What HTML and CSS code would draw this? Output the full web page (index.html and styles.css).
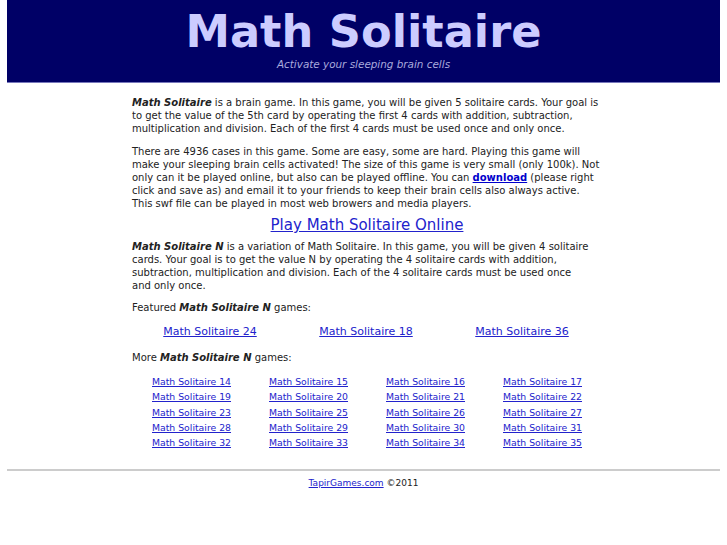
FILE: index.html
```html
<!DOCTYPE html>
<html>
<head>
<meta charset="utf-8">
<title>Math Solitaire</title>
<link rel="stylesheet" href="styles.css">
</head>
<body>
<div class="header">
  <h1 class="title">Math Solitaire</h1>
  <div class="tagline">Activate your sleeping brain cells</div>
</div>
<div class="main">
  <p><b><i>Math Solitaire</i></b> is a brain game. In this game, you will be given 5 solitaire cards. Your goal is to get the value of the 5th card by operating the first 4 cards with addition, subtraction, multiplication and division. Each of the first 4 cards must be used once and only once.</p>
  <p class="p2">There are 4936 cases in this game. Some are easy, some are hard. Playing this game will make your sleeping brain cells activated! The size of this game is very small (only 100k). Not only can it be played online, but also can be played offline. You can <a class="dl" href="#">download</a> (please right click and save as) and email it to your friends to keep their brain cells also always active. This swf file can be played in most web browers and media players.</p>
  <div class="play"><a href="#">Play Math Solitaire Online</a></div>
  <p class="p3"><b><i>Math Solitaire N</i></b> is a variation of Math Solitaire. In this game, you will be given 4 solitaire cards. Your goal is to get the value N by operating the 4 solitaire cards with addition, subtraction, multiplication and division. Each of the 4 solitaire cards must be used once <span class="nowrap">and only once.</span></p>
  <p class="feat-label">Featured <b><i>Math Solitaire N</i></b> games:</p>
  <div class="featured">
    <a href="#">Math Solitaire 24</a>
    <a href="#">Math Solitaire 18</a>
    <a href="#">Math Solitaire 36</a>
  </div>
  <p class="more">More <b><i>Math Solitaire N</i></b> games:</p>
  <div class="grid">
    <a href="#">Math Solitaire 14</a><a href="#">Math Solitaire 15</a><a href="#">Math Solitaire 16</a><a href="#">Math Solitaire 17</a>
    <a href="#">Math Solitaire 19</a><a href="#">Math Solitaire 20</a><a href="#">Math Solitaire 21</a><a href="#">Math Solitaire 22</a>
    <a href="#">Math Solitaire 23</a><a href="#">Math Solitaire 25</a><a href="#">Math Solitaire 26</a><a href="#">Math Solitaire 27</a>
    <a href="#">Math Solitaire 28</a><a href="#">Math Solitaire 29</a><a href="#">Math Solitaire 30</a><a href="#">Math Solitaire 31</a>
    <a href="#">Math Solitaire 32</a><a href="#">Math Solitaire 33</a><a href="#">Math Solitaire 34</a><a href="#">Math Solitaire 35</a>
  </div>
</div>
<div class="rule"></div>
<div class="footer"><a href="#">TapirGames.com</a> &copy;2011</div>
</body>
</html>
```
FILE: styles.css
```css
html, body {
  background: #ffffff;
}
body {
  margin: 0 7px;
  font-family: "DejaVu Sans", Verdana, sans-serif;
  color: #222222;
}
a {
  color: #2222cc;
}
.header {
  background: #000066;
  border-bottom: 1px solid #7777bb;
  text-align: center;
  height: 82px;
}
.title {
  margin: 0;
  padding-top: 7px;
  font-size: 44.7px;
  line-height: 50px;
  font-weight: bold;
  color: #ccccff;
}
.tagline {
  margin-top: 1px;
  font-size: 10.4px;
  line-height: 13px;
  font-style: italic;
  color: #aaaadd;
}
.main {
  width: 470px;
  margin-left: 125px;
  padding-top: 3px;
  font-size: 10px;
  line-height: 13px;
}
.main p {
  margin: 10px 0;
}
.main p.p2 {
  margin-bottom: 6px;
}
.nowrap {
  white-space: nowrap;
}
.dl {
  font-weight: bold;
  color: #0000cc;
}
.play {
  text-align: center;
  font-size: 15px;
  line-height: 18px;
  margin: 0;
}
.main p.p3 {
  margin-top: 6px;
  margin-bottom: 9px;
}
.main p.feat-label {
  margin-top: 9px;
}
.featured {
  display: grid;
  grid-template-columns: repeat(3, 156px);
  text-align: center;
  font-size: 11px;
  line-height: 14px;
  margin-top: 11px;
}
.main p.more {
  margin-top: 12px;
}
.grid {
  display: grid;
  grid-template-columns: repeat(4, 117px);
  padding-left: 20px;
  margin-top: 10px;
  font-size: 9.3px;
  line-height: 15.25px;
}
.rule {
  margin-top: 19px;
  border-top: 2px solid #cccccc;
}
.footer {
  text-align: center;
  font-size: 9px;
  line-height: 12px;
  margin-top: 6px;
}
```
